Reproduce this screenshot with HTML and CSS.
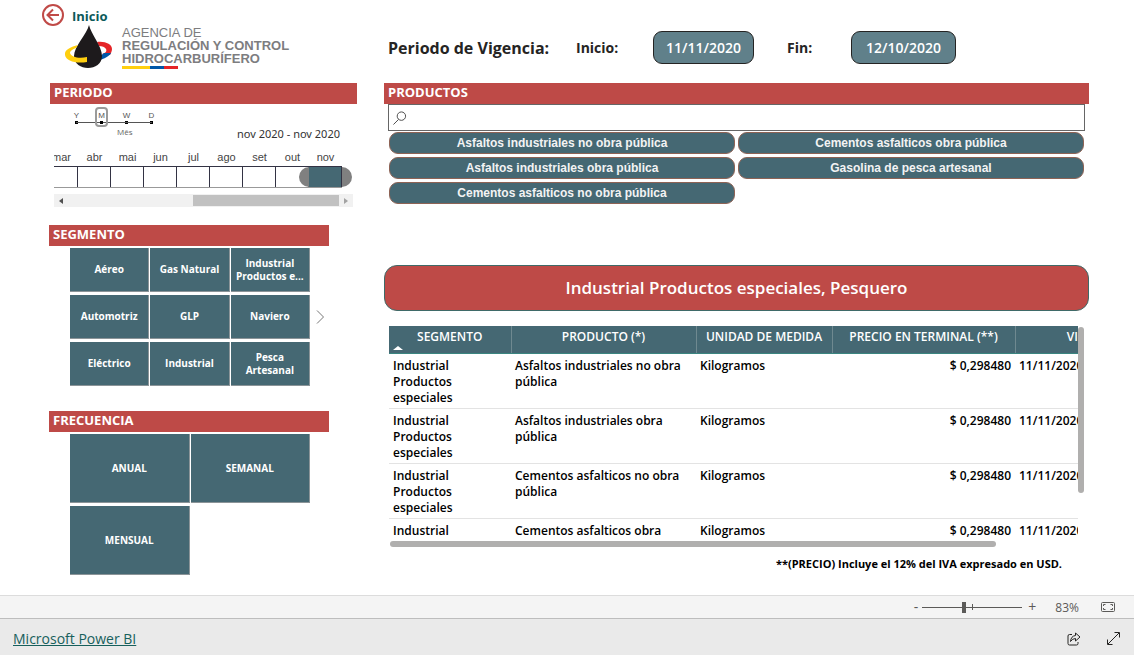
FILE: index.html
```html
<!DOCTYPE html>
<html lang="es">
<head>
<meta charset="utf-8">
<title>Precios de hidrocarburos</title>
<link rel="stylesheet" href="styles.css">
</head>
<body>
<main class="report">
  <div class="side">
    <header class="brand">
      <a class="home" href="#">
        <svg class="home-icon" viewBox="0 0 24 24" width="24" height="24" fill="none" stroke="#c04a47" stroke-width="2"><circle cx="12" cy="12" r="10"/><path d="M18 12H6.500M12 6.500L6.500 12l5.500 5.500"/></svg>
        <span>Inicio</span>
      </a>
      <div class="logo">
        <svg viewBox="0 0 48 44" width="48" height="44">
          <path d="M32 17c8-1 15 2 15 7 0 2-1 4-2 6l-8-1c4-1 5-3 4-5-1-2-4-3-7-3z" fill="#e52528"/>
          <path d="M46 28c-2 4-9 7-18 9l4-6c3 0 5-1 7-3z" fill="#0057a8"/>
          <path d="M24 0C22 9 9 21 9 31c0 8 7 12 14 12s14-4 14-12C37 21 26 9 24 0z" fill="#1d1a1c"/>
          <path d="M13 20C4 22-1 26 0 30c1 6 11 9 22 7v-5C14 34 6 32 5 28c0-2 3-4 6-5z" fill="#ffcf0f"/>
        </svg>
        <div class="logo-text">
          <span>AGENCIA DE</span>
          <strong>REGULACIÓN Y CONTROL</strong>
          <strong>HIDROCARBURÍFERO</strong>
          <i class="flag"></i>
        </div>
      </div>
    </header>

    <section class="period">
      <h2 class="bar">PERIODO</h2>
      <div class="timeline">
        <div class="grain">
          <button>Y</button><button class="on">M</button><button>W</button><button>D</button>
        </div>
        <div class="grain-name">Mês</div>
        <div class="range-text">nov 2020 - nov 2020</div>
        <div class="months">
          <span>mar</span><span>abr</span><span>mai</span><span>jun</span><span>jul</span><span>ago</span><span>set</span><span>out</span><span>nov</span>
        </div>
        <div class="track">
          <div class="cells"><i></i><i></i><i></i><i></i><i></i><i></i><i></i><i></i><i class="sel"></i></div>
          <i class="grip left"></i><i class="grip right"></i>
        </div>
        <div class="scroll">
          <button aria-label="Anterior"><svg width="4" height="6" viewBox="0 0 4 6"><path d="M4 0v6L0 3z" fill="#505050"/></svg></button>
          <div class="rail"><i></i></div>
          <button aria-label="Siguiente"><svg width="4" height="6" viewBox="0 0 4 6"><path d="M0 0v6l4-3z" fill="#a3a3a3"/></svg></button>
        </div>
      </div>
    </section>

    <section class="slicer segment">
      <h2 class="bar">SEGMENTO</h2>
      <div class="slicer-body">
        <div class="tiles three">
          <button>Aéreo</button><button>Gas Natural</button><button>Industrial<br>Productos e...</button>
          <button>Automotriz</button><button>GLP</button><button>Naviero</button>
          <button>Eléctrico</button><button>Industrial</button><button>Pesca<br>Artesanal</button>
        </div>
        <button class="next" aria-label="Más"><svg width="9" height="14" viewBox="0 0 9 14" fill="none" stroke="#777"><path d="M1 .5L7.500 7 1 13.500"/></svg></button>
      </div>
    </section>

    <section class="slicer">
      <h2 class="bar">FRECUENCIA</h2>
      <div class="slicer-body">
        <div class="tiles two">
          <button>ANUAL</button><button>SEMANAL</button><button>MENSUAL</button>
        </div>
      </div>
    </section>
  </div>

  <div class="content">
    <div class="validity">
      <h1>Periodo de Vigencia:</h1>
      <span class="lead">Inicio:</span>
      <output class="date">11/11/2020</output>
      <span class="lead end">Fin:</span>
      <output class="date last">12/10/2020</output>
    </div>

    <section>
      <h2 class="bar">PRODUCTOS</h2>
      <label class="search">
        <svg width="14" height="14" viewBox="0 0 15 15" fill="none" stroke="#444"><circle cx="9" cy="5.500" r="4.500"/><path d="M6 9L.5 14.500"/></svg>
        <input type="text" aria-label="Buscar productos">
      </label>
      <div class="pills">
        <button>Asfaltos industriales no obra pública</button><button>Cementos asfalticos obra pública</button>
        <button>Asfaltos industriales obra pública</button><button>Gasolina de pesca artesanal</button>
        <button>Cementos asfalticos no obra pública</button>
      </div>
    </section>

    <div class="banner">Industrial Productos especiales, Pesquero</div>

    <div class="grid">
      <div class="grid-view">
        <table>
          <colgroup><col class="c1"><col class="c2"><col class="c3"><col class="c4"><col class="c5"></colgroup>
          <thead><tr><th class="sorted">SEGMENTO</th><th>PRODUCTO (*)</th><th>UNIDAD DE MEDIDA</th><th>PRECIO EN TERMINAL (**)</th><th>VIGENCIA</th></tr></thead>
          <tbody>
            <tr><td>Industrial Productos especiales</td><td>Asfaltos industriales no obra pública</td><td>Kilogramos</td><td class="num">$ 0,298480</td><td>11/11/2020</td></tr>
            <tr><td>Industrial Productos especiales</td><td>Asfaltos industriales obra pública</td><td>Kilogramos</td><td class="num">$ 0,298480</td><td>11/11/2020</td></tr>
            <tr><td>Industrial Productos especiales</td><td>Cementos asfalticos no obra pública</td><td>Kilogramos</td><td class="num">$ 0,298480</td><td>11/11/2020</td></tr>
            <tr><td>Industrial Productos especiales</td><td>Cementos asfalticos obra pública</td><td>Kilogramos</td><td class="num">$ 0,298480</td><td>11/11/2020</td></tr>
          </tbody>
        </table>
      </div>
      <i class="vbar"></i>
      <i class="hbar"></i>
    </div>
    <p class="note">**(PRECIO) Incluye el 12% del IVA expresado en USD.</p>
  </div>
</main>

<div class="zoombar">
  <button aria-label="Alejar">-</button>
  <input type="range" min="0" max="100" value="41" aria-label="Zoom">
  <button aria-label="Acercar">+</button>
  <span class="percent">83%</span>
  <button class="fit" aria-label="Ajustar a la página"><svg width="14" height="10" viewBox="0 0 14 10" fill="none" stroke="#5b5a58"><rect x=".5" y=".5" width="13" height="9" rx="1"/><path d="M2.500 4V2.500H4.500M2.500 6v1.500H4.500M11.500 4V2.500H9.500M11.500 6v1.500H9.500"/></svg></button>
</div>
<footer class="foot">
  <a href="#">Microsoft Power BI</a>
  <div class="foot-actions">
    <button aria-label="Compartir"><svg width="14" height="14" viewBox="0 0 14 14" fill="none" stroke="#252423"><path d="M5 2.500H2.500Q1 2.500 1 4v7.500Q1 13 2.500 13H9.500Q11 13 11 11.500V10"/><path d="M8.500 1L13 5 8.500 9V6.500Q5.500 6.500 3.500 9.500 4 4 8.500 3.500z" stroke-linejoin="round"/></svg></button>
    <button aria-label="Pantalla completa"><svg width="13" height="13" viewBox="0 0 13 13" fill="none" stroke="#252423"><path d="M1 12L12 1M7.500.5H12.500V5.500M.5 7.500V12.500H5.500"/></svg></button>
  </div>
</footer>
</body>
</html>
```

FILE: styles.css
```css
* { box-sizing: border-box; }
body {
  margin: 0;
  min-height: 100vh;
  display: flex;
  flex-direction: column;
  background: #fff;
  color: #252423;
  font-family: "Open Sans", "Noto Sans", sans-serif;
  font-size: 12px;
}
button { font: inherit; color: inherit; border: 0; padding: 0; background: none; cursor: pointer; }
svg { display: block; flex: none; }
h1, h2, p { margin: 0; }
i { display: block; }

.report {
  flex: 1;
  display: grid;
  grid-template-columns: minmax(0, 315fr) minmax(0, 705fr);
  column-gap: 27px;
  align-items: start;
  padding: 0 45px 0 42px;
}

.bar {
  height: 21px;
  padding-left: 4px;
  background: #be4a47;
  color: #fff;
  font-size: 13px;
  line-height: 18px;
  font-weight: 700;
}

/* Brand */
.brand { height: 83px; padding-top: 3px; }
.home { display: flex; height: 24px; gap: 7px; text-decoration: none; color: #0b5a5a; font-size: 13px; line-height: 26px; font-weight: 700; margin-left: -1px; }
.logo { display: flex; gap: 9px; padding-left: 23px; margin-top: -2px; }
.logo-text { display: flex; flex-direction: column; padding-top: 1px; color: #7d7d7f; font-family: "Liberation Sans", sans-serif; font-size: 13px; line-height: 13px; white-space: nowrap; }
.logo-text strong { font-weight: 700; }
.flag { width: 56px; height: 3px; margin-top: 1px; background: linear-gradient(90deg, #ffcf0f 50%, #0057a8 50% 75%, #e52528 75%); }

/* Timeline */
.period { margin-left: 8px; }
.timeline { padding: 5px 4px 0; }
.grain { display: flex; width: 100px; margin-left: 10px; position: relative; }
.grain::before { content: ""; position: absolute; left: 12px; right: 12px; top: 13px; height: 1px; background: #555; }
.grain button { flex: 1; display: flex; flex-direction: column; align-items: center; justify-content: space-between; height: 15px; padding-top: 2px; font: 8px/9px "Liberation Sans", sans-serif; color: #555; }
.grain button::after { content: ""; width: 3px; height: 3px; background: #000; }
.grain .on { position: relative; }
.grain .on::before { content: ""; position: absolute; inset: -2px 6px -3px; border: 2px solid #9a9a9a; border-radius: 4px; }
.grain-name { font: 8px/9px "Open Sans", sans-serif; color: #666; margin: 3px 0 0 63px; }
.range-text { font: 11px/12px "Noto Sans", sans-serif; color: #333; text-align: right; padding-right: 13px; margin-top: -8px; }
.months { display: flex; justify-content: flex-end; overflow: hidden; margin: 11px 11px 0 0; font: 11px/12px "Liberation Sans", sans-serif; color: #444; }
.months span { flex: 0 0 33px; text-align: center; }
.track { position: relative; margin: 3px 11px 0 0; }
.cells { display: flex; justify-content: flex-end; overflow: hidden; height: 22px; border-top: 1px solid #333344; border-bottom: 1px solid #999; }
.cells i { flex: 0 0 33px; border-right: 1px solid #333344; }
.cells .sel { background: #456873; }
.grip { position: absolute; top: 1px; width: 10px; height: 20px; background: #808080; }
.grip.left { right: 33px; border-radius: 10px 0 0 10px; }
.grip.right { right: -10px; border-radius: 0 10px 10px 0; }
.scroll { display: flex; height: 13px; margin: 6px 0 0; background: #f1f1f1; }
.scroll button { width: 14px; display: grid; place-items: center; }
.rail { flex: 1; padding: 1px 0; display: flex; justify-content: flex-end; }
.rail i { width: 54%; background: #c1c1c1; }

/* Tile slicers */
.slicer { width: 280px; margin: 25px 0 0 7px; }
.segment { margin-top: 18px; }
.slicer-body { display: flex; align-items: center; gap: 6px; padding: 2px 0 0 21px; }
.tiles { display: grid; width: 240px; gap: 3px 1px; }
.three { grid-template-columns: repeat(3, 1fr); grid-auto-rows: 44px; }
.two { grid-template-columns: repeat(2, 1fr); grid-auto-rows: 69px; }
.tiles button { background: #456873; border: solid #8b9498; border-width: 0 1px 1px 0; color: #fff; font-size: 10px; line-height: 13px; font-weight: 700; }

/* Validity header */
.validity { display: flex; align-items: center; height: 83px; padding: 12px 0 0 4px; font-weight: 600; white-space: nowrap; }
.validity h1 { width: 188px; font-size: 16px; font-weight: 700; }
.lead { width: 77px; font-size: 14px; font-weight: 700; }
.lead.end { width: 64px; margin-left: 33px; }
.date { width: 101px; height: 33px; border: 1px solid #252423; border-radius: 9px; background: #60808a; color: #fff; font-size: 14px; line-height: 31px; text-align: center; }
.date.last { width: 105px; }

.search { display: flex; align-items: center; gap: 4px; height: 27px; margin: 0 4px; padding-left: 4px; border: 1px solid #666; }
.search input { flex: 1; min-width: 0; border: 0; outline: 0; background: none; font: inherit; }
.pills { display: grid; grid-template-columns: 1fr 1fr; gap: 3px; margin: 1px 5px 0; }
.pills button { height: 22px; border: 1px solid #8e6355; border-radius: 9px; background: #456873; color: #f3f3f3; font: bold 12px/20px "Liberation Sans", sans-serif; }

.banner { margin-top: 61px; border: 1px solid #3f6a68; border-radius: 13px; background: #be4a47; color: #fff; text-align: center; font-size: 17px; line-height: 44px; font-weight: 600; }

/* Price table */
.grid { display: grid; grid-template-columns: minmax(0, 1fr) 6px; margin: 15px 5px 0; color: #000; }
.grid-view { height: 215px; overflow: hidden; }
table { width: 784px; table-layout: fixed; border-collapse: collapse; }
.c1 { width: 122px; } .c2 { width: 185px; } .c3 { width: 136px; } .c4 { width: 183px; } .c5 { width: 158px; }
th { height: 27px; padding: 2px 0 0; vertical-align: top; background: #456873; border-bottom: 1px solid #3a8580; color: #fff; font-weight: 600; line-height: 17px; white-space: nowrap; }
th + th { border-left: 1px solid #6f8990; }
.sorted { position: relative; }
.sorted::after { content: ""; position: absolute; left: 4px; bottom: 3px; border: solid transparent; border-width: 0 5px 4px; border-bottom-color: #fff; }
td { padding: 4px 4px 2px; vertical-align: top; line-height: 16px; font-weight: 600; border-bottom: 1px solid #e3e3e3; }
.num { text-align: right; }
.vbar { height: 166px; margin-top: 1px; border-radius: 3px; background: #b0afae; }
.hbar { height: 6px; width: 88%; margin-left: 1px; border-radius: 3px; background: #b0afae; }
.note { margin: 8px 27px 0 0; text-align: right; color: #000; font-size: 11px; font-weight: 700; line-height: 17px; }

/* Status bars */
.zoombar { display: flex; align-items: center; justify-content: flex-end; height: 23px; padding-right: 19px; background: #f4f4f4; border-top: 1px solid #dcdcdc; color: #5b5a58; }
.zoombar > button { font-size: 14px; line-height: 20px; }
.zoombar input { width: 100px; height: 12px; margin: 0 6px 0 4px; appearance: none; background: linear-gradient(#5b5a58, #5b5a58) 50px 3px / 1px 6px no-repeat, linear-gradient(#5b5a58, #5b5a58) 0 6px / 100% 1px no-repeat; }
.zoombar input::-webkit-slider-thumb { appearance: none; width: 4px; height: 11px; background: #5b5a58; }
.percent { margin: 0 22px 0 19px; }
.foot { display: flex; align-items: center; justify-content: space-between; height: 37px; padding: 3px 14px 0 13px; background: #eaeaea; border-top: 1px solid #bdbdbd; }
.foot a { color: #17605c; font-size: 14px; }
.foot-actions { display: flex; gap: 26px; }
```
